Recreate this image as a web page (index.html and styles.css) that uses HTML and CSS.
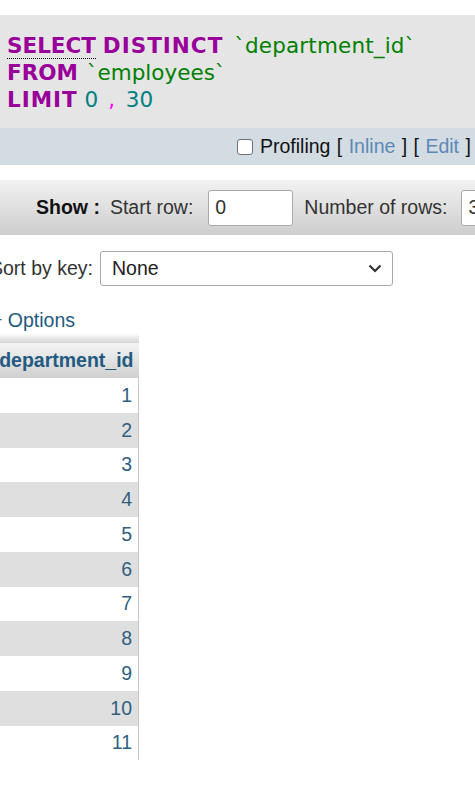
FILE: index.html
```html
<!DOCTYPE html>
<html>
<head>
<meta charset="utf-8">
<link rel="stylesheet" href="styles.css">
</head>
<body>
<div class="page">
  <div class="sql">
    <div class="line"><span class="kw doc">SELECT</span> <span class="kw wide">DISTINCT</span> <span class="bt bt1">`department_id`</span></div>
    <div class="line"><span class="kw">FROM</span> <span class="bt bt2">`employees`</span></div>
    <div class="line"><span class="kw wide">LIMIT</span> <span class="num">0</span> <span class="punc">,</span> <span class="num num2">30</span></div>
  </div>
  <div class="tools">
    <span class="cb"></span><span class="txt">Profiling [ <a class="lnk">Inline</a> ] [ <a class="lnk">Edit</a> ] <span class="dark">[</span></span>
  </div>
  <div class="showbar">
    <span class="bold">Show :</span>
    <span class="lbl">Start row:</span>
    <span class="inp inp-start">0</span>
    <span class="lbl">Number of rows:</span>
    <span class="inp inp-rows">30</span>
  </div>
  <div class="sortrow">
    <span class="lbl">Sort by key:</span>
    <span class="select">None
      <svg class="chev" width="14" height="9" viewBox="0 0 14 9"><path d="M1.5 1.5 L7 7 L12.5 1.5" fill="none" stroke="#333" stroke-width="2.2"/></svg>
    </span>
  </div>
  <div class="options">+ Options</div>
  <table class="data">
    <thead>
      <tr class="strip"><th></th></tr>
      <tr class="head"><th>department_id</th></tr>
    </thead>
    <tbody>
      <tr><td>1</td></tr>
      <tr><td>2</td></tr>
      <tr><td>3</td></tr>
      <tr><td>4</td></tr>
      <tr><td>5</td></tr>
      <tr><td>6</td></tr>
      <tr><td>7</td></tr>
      <tr><td>8</td></tr>
      <tr><td>9</td></tr>
      <tr><td>10</td></tr>
      <tr><td>11</td></tr>
    </tbody>
  </table>
</div>
</body>
</html>
```
FILE: styles.css
```css
html, body {
  margin: 0;
  padding: 0;
  background: #fff;
  overflow: hidden;
}
.page {
  width: 475px;
  height: 790px;
  overflow: hidden;
  font-family: "Liberation Sans", Arial, sans-serif;
  font-size: 19.5px;
  color: #000;
  padding-top: 15px;
  box-sizing: border-box;
}
.sql {
  background: #e5e5e5;
  height: 113px;
  box-sizing: border-box;
  padding: 17px 0 0 7px;
  font-family: "DejaVu Sans", Verdana, sans-serif;
  font-size: 21.5px;
  line-height: 27px;
  white-space: nowrap;
}
.kw { color: #990099; font-weight: bold; }
.wide { letter-spacing: 1px; }
.doc { border-bottom: 1px dotted #000; }
.bt { color: #008000; }
.bt1 { margin-left: 4px; letter-spacing: 0.15px; }
.bt2 { margin-left: 2px; }
.num { color: #008080; }
.num2 { margin-left: 4px; }
.punc { color: #ff00ff; margin-left: 3px; }
.tools {
  background: #d3dce3;
  height: 37px;
  display: flex;
  align-items: center;
  padding-left: 237px;
  white-space: nowrap;
  color: #111;
}
.cb {
  width: 14px;
  height: 14px;
  border: 1.5px solid #707070;
  border-radius: 3px;
  background: #fff;
  margin-right: 7px;
  flex: none;
}
.txt { word-spacing: 1px; }
.lnk { color: #5b89b6; }
.dark { color: #1a2a6a; }
.showbar {
  margin-top: 15px;
  height: 55px;
  background: linear-gradient(#f2f2f2, #cdcdcd);
  display: flex;
  align-items: center;
  padding-left: 36px;
  white-space: nowrap;
}
.bold { font-weight: bold; color: #111; margin-right: 10px; }
.lbl { color: #333; }
.inp {
  display: inline-flex;
  align-items: center;
  height: 36px;
  box-sizing: border-box;
  border: 1px solid #aaa;
  border-radius: 3px;
  background: #fff;
  padding-left: 6px;
  color: #333;
  flex: none;
}
.inp-start { width: 85px; margin: 0 11px 0 15px; }
.inp-rows { width: 60px; margin-left: 14px; }
.sortrow {
  margin-top: 16px;
  margin-left: -10px;
  height: 35px;
  display: flex;
  align-items: center;
  white-space: nowrap;
}
.select {
  display: inline-flex;
  align-items: center;
  justify-content: space-between;
  width: 293px;
  height: 35px;
  box-sizing: border-box;
  border: 1px solid #aaa;
  border-radius: 3px;
  background: #fff;
  padding: 0 10px 0 11px;
  margin-left: 7px;
  color: #222;
}
.chev { display: block; }
.options {
  margin-top: 22px;
  margin-left: -9px;
  color: #235a81;
  height: 25px;
  line-height: 25px;
}
.data {
  margin-top: 0;
  margin-left: -10px;
  width: 149px;
  border-collapse: collapse;
  border-spacing: 0;
}
.data th, .data td {
  padding: 0 6px 0 0;
  text-align: right;
  box-sizing: border-box;
}
.strip th {
  height: 10px;
  background: linear-gradient(#ffffff, #d6d6d6);
}
.head th {
  height: 35px;
  background: linear-gradient(#f4f4f4, #d0d0d0);
  color: #235a81;
  font-weight: bold;
  padding-right: 5px;
}
.data td {
  height: 34.75px;
  color: #2f5f80;
  border-right: 1px solid #c8c8c8;
}
.data tbody tr:nth-child(even) td { background: #dfdfdf; }
```
